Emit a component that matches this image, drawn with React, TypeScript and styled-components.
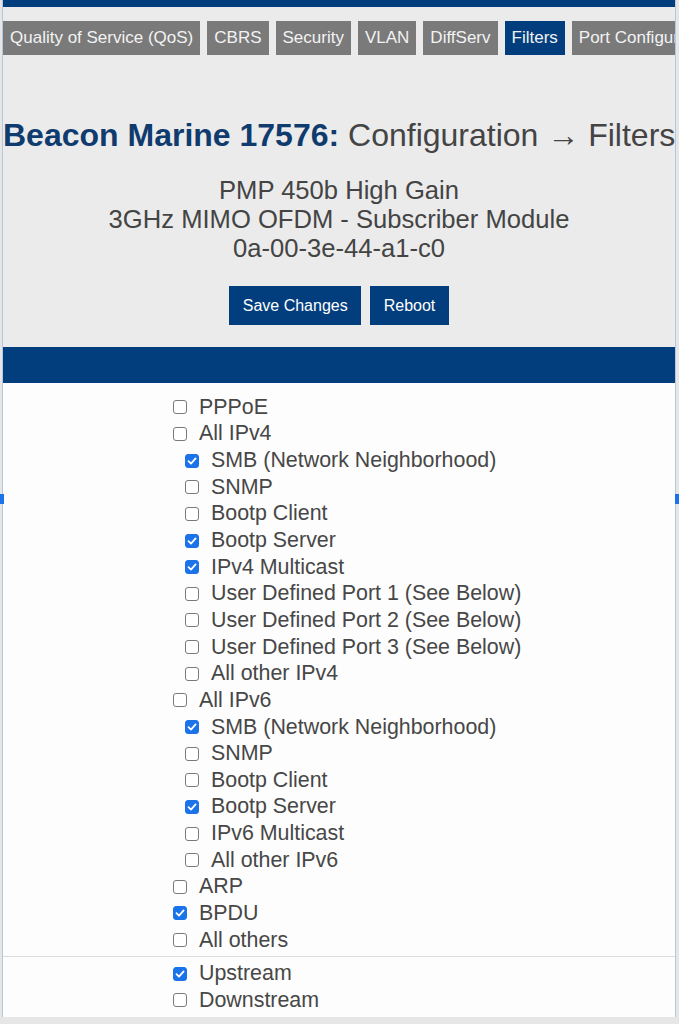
import styled, { createGlobalStyle } from 'styled-components';

const GlobalStyle = createGlobalStyle`
  body {
    margin: 0;
    background: #ffffff;
    font-family: 'Liberation Sans', Arial, sans-serif;
  }
`;

const Page = styled.div`
  position: relative;
  width: 679px;
  height: 1024px;
  overflow: hidden;
  background: #e6e6e6;
`;

const Panel = styled.div`
  margin-left: 2px;
  width: 674px;
  box-sizing: border-box;
  border-left: 1px solid #b4c8e2;
  border-right: 1px solid #b4c8e2;
  overflow: hidden;
  background: #fdfdfd;
`;

const TopBar = styled.div`
  height: 7px;
  background: #023e7d;
`;

const Header = styled.header`
  background: #ebebeb;
  padding: 14px 0 22px;
  text-align: center;
`;

const Tabs = styled.nav`
  display: flex;
  gap: 7px;
  white-space: nowrap;
`;

const Tab = styled.span<{ $active?: boolean }>`
  flex: none;
  height: 34px;
  line-height: 34px;
  padding: 0 7px;
  font-size: 17px;
  color: #f2f2f2;
  background: ${(p) => (p.$active ? '#023e7d' : '#7a7a7a')};
`;

const Title = styled.h1`
  margin: 62px 0 0;
  font-size: 32px;
  line-height: 37px;
  font-weight: normal;
  color: #444444;
  white-space: nowrap;
`;

const Device = styled.strong`
  color: #0f3b6e;
`;

const Subtitle = styled.div`
  margin-top: 22px;
  font-size: 25.6px;
  line-height: 29px;
  color: #444444;
`;

const Actions = styled.div`
  margin-top: 23px;
  display: flex;
  justify-content: center;
  gap: 9px;
`;

const Button = styled.button`
  height: 39px;
  padding: 0 13.5px;
  border: none;
  background: #023e7d;
  color: #ffffff;
  font-family: inherit;
  font-size: 16px;
`;

const BlueBar = styled.div`
  height: 36px;
  background: #023e7d;
`;

const Group = styled.div<{ $divider?: boolean }>`
  padding: ${(p) => (p.$divider ? '11px 0 3px 170px' : '3px 0 3px 170px')};
  border-bottom: ${(p) => (p.$divider ? '1px solid #dcdcdc' : 'none')};
`;

const Row = styled.label<{ $nested?: boolean }>`
  display: flex;
  align-items: center;
  gap: 12px;
  height: 26.65px;
  padding-left: ${(p) => (p.$nested ? '12px' : '0')};
  font-size: 21.4px;
  color: #474747;
`;

const Box = styled.span<{ $checked?: boolean }>`
  flex: none;
  width: 14px;
  height: 14px;
  box-sizing: border-box;
  border-radius: 3px;
  border: 1.5px solid ${(p) => (p.$checked ? '#1a73e8' : '#7a7a7a')};
  background: ${(p) => (p.$checked ? '#1a73e8' : '#ffffff')};
  display: flex;
  align-items: center;
  justify-content: center;
`;

const Handle = styled.div<{ $side: 'left' | 'right' }>`
  position: absolute;
  top: 494px;
  ${(p) => (p.$side === 'left' ? 'left: 0;' : 'left: 675px;')}
  width: 4px;
  height: 10px;
  background: #1a73e8;
`;

const Footer = styled.div`
  height: 20px;
  background: #e6e6e6;
`;

type Item = { label: string; checked?: boolean; nested?: boolean };

const filters: Item[] = [
  { label: 'PPPoE' },
  { label: 'All IPv4' },
  { label: 'SMB (Network Neighborhood)', checked: true, nested: true },
  { label: 'SNMP', nested: true },
  { label: 'Bootp Client', nested: true },
  { label: 'Bootp Server', checked: true, nested: true },
  { label: 'IPv4 Multicast', checked: true, nested: true },
  { label: 'User Defined Port 1 (See Below)', nested: true },
  { label: 'User Defined Port 2 (See Below)', nested: true },
  { label: 'User Defined Port 3 (See Below)', nested: true },
  { label: 'All other IPv4', nested: true },
  { label: 'All IPv6' },
  { label: 'SMB (Network Neighborhood)', checked: true, nested: true },
  { label: 'SNMP', nested: true },
  { label: 'Bootp Client', nested: true },
  { label: 'Bootp Server', checked: true, nested: true },
  { label: 'IPv6 Multicast', nested: true },
  { label: 'All other IPv6', nested: true },
  { label: 'ARP' },
  { label: 'BPDU', checked: true },
  { label: 'All others' },
];

const directions: Item[] = [
  { label: 'Upstream', checked: true },
  { label: 'Downstream' },
];

const Check = ({ checked }: { checked?: boolean }) => (
  <Box $checked={checked}>
    {checked ? (
      <svg width="10" height="10" viewBox="0 0 10 10">
        <path d="M1.5 5.2 L4 7.6 L8.6 2.4" fill="none" stroke="#fff" strokeWidth="1.8" strokeLinecap="round" strokeLinejoin="round" />
      </svg>
    ) : null}
  </Box>
);

const tabs = ['Quality of Service (QoS)', 'CBRS', 'Security', 'VLAN', 'DiffServ', 'Filters', 'Port Configuration'];

const App = () => {
  return (
    <Page>
      <GlobalStyle />
      <Panel>
        <TopBar />
        <Header>
          <Tabs>
            {tabs.map((t) => (
              <Tab key={t} $active={t === 'Filters'}>
                {t}
              </Tab>
            ))}
          </Tabs>
          <Title>
            <Device>Beacon Marine 17576:</Device> Configuration → Filters
          </Title>
          <Subtitle>
            PMP 450b High Gain
            <br />
            3GHz MIMO OFDM - Subscriber Module
            <br />
            0a-00-3e-44-a1-c0
          </Subtitle>
          <Actions>
            <Button>Save Changes</Button>
            <Button>Reboot</Button>
          </Actions>
        </Header>
        <BlueBar />
        <Group $divider>
          {filters.map((f, i) => (
            <Row key={i} $nested={f.nested}>
              <Check checked={f.checked} />
              {f.label}
            </Row>
          ))}
        </Group>
        <Group>
          {directions.map((d) => (
            <Row key={d.label}>
              <Check checked={d.checked} />
              {d.label}
            </Row>
          ))}
        </Group>
      </Panel>
      <Footer />
      <Handle $side="left" />
      <Handle $side="right" />
    </Page>
  );
};

export default App;
